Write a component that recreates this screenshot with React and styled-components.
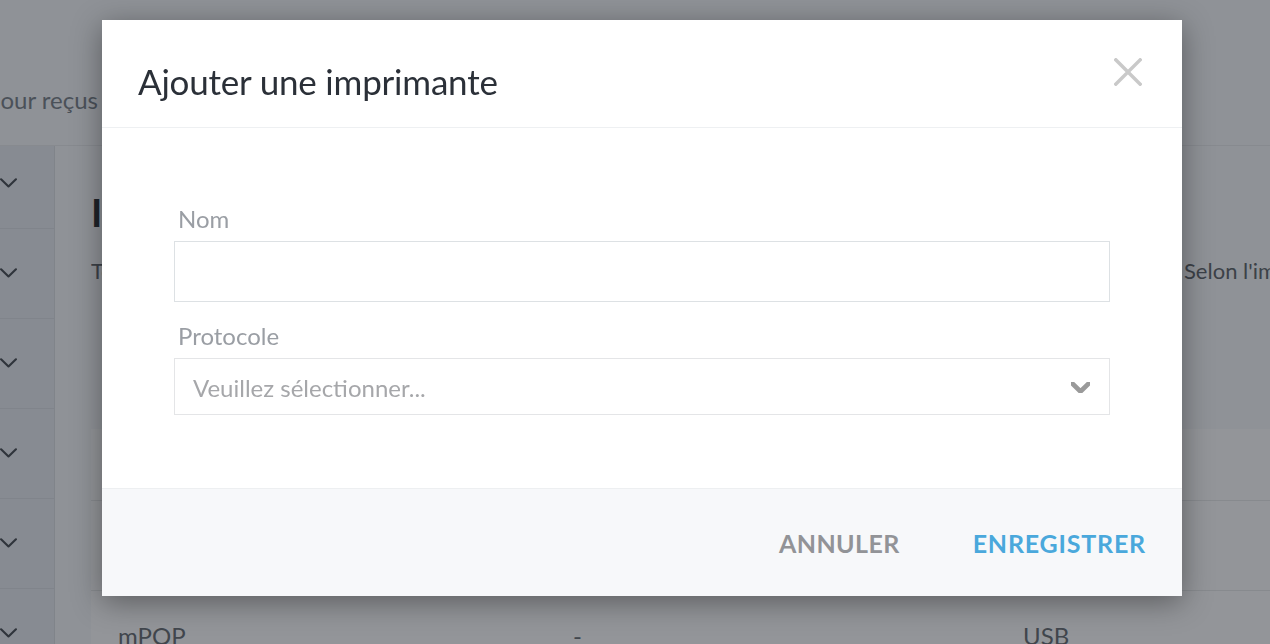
import React from 'react';
import styled, { createGlobalStyle } from 'styled-components';

const Global = createGlobalStyle`
  html, body { margin: 0; padding: 0; height: 100%; overflow: hidden; }
  body { font-family: Lato, "Noto Sans", sans-serif; background: #8f9297; }
  * { box-sizing: border-box; }
`;

const Page = styled.div`
  width: 1270px;
  height: 644px;
  display: flex;
  flex-direction: column;
  overflow: hidden;
  background: #8f9297;
`;

const TopBar = styled.header`
  height: 146px;
  flex: none;
  border-bottom: 1px solid #878a8f;
  display: flex;
  align-items: flex-end;
  padding-bottom: 31px;
`;

const Tab = styled.span`
  font-size: 24px;
  line-height: 29px;
  color: #4b5159;
  margin-left: -13px;
  white-space: nowrap;
`;

const Content = styled.div`
  flex: 1;
  display: flex;
  min-height: 0;
`;

const Sidebar = styled.nav`
  width: 55px;
  flex: none;
  background: #878b92;
  border-right: 1px solid #80848a;
  display: flex;
  flex-direction: column;
`;

const SideRow = styled.div`
  height: ${p => (p.$first ? 83 : 90)}px;
  flex: none;
  border-bottom: 1px solid #80848b;
  display: flex;
  align-items: center;
  padding-bottom: ${p => (p.$first ? 8 : 0)}px;
  color: #2f343b;
`;

const Main = styled.main`
  flex: 1;
  padding-left: 36px;
  display: flex;
  flex-direction: column;
  min-width: 0;
`;

const Heading = styled.h1`
  margin: 44px 0 0;
  font-size: 38px;
  line-height: 44px;
  font-weight: 700;
  color: #1e2329;
  white-space: nowrap;
`;

const Para = styled.p`
  margin: 22px 0 0;
  font-size: 22px;
  line-height: 30px;
  color: #3c4148;
  white-space: nowrap;
  display: flex;
`;

const ParaLead = styled.span`
  width: 1093px;
  flex: none;
  overflow: hidden;
`;

const Table = styled.div`
  margin-top: 143px;
  background: #939599;
  display: flex;
  flex-direction: column;
`;

const TRow = styled.div`
  height: ${p => (p.$head ? 72 : 90)}px;
  flex: none;
  border-bottom: 1px solid #878a8e;
  display: grid;
  grid-template-columns: 455px 450px 1fr;
  align-items: center;
  padding-left: 27px;
  font-size: 24px;
  color: #41464d;
  white-space: nowrap;
`;

const Overlay = styled.div`
  position: fixed;
  inset: 0;
  padding: 20px 0 0 102px;
`;

const Modal = styled.div`
  width: 1080px;
  background: #ffffff;
  box-shadow: 0 6px 28px rgba(0, 0, 0, 0.38);
  display: flex;
  flex-direction: column;
`;

const ModalHeader = styled.div`
  height: 108px;
  flex: none;
  border-bottom: 1px solid #eef0f2;
  display: flex;
  align-items: center;
  justify-content: space-between;
  padding: 14px 40px 0 36px;
`;

const Title = styled.h2`
  margin: 0;
  font-size: 35px;
  line-height: 42px;
  font-weight: 400;
  color: #2b3038;
  letter-spacing: -0.2px;
`;

const CloseButton = styled.button`
  border: 0;
  background: none;
  padding: 0;
  width: 28px;
  height: 28px;
  display: flex;
  align-items: center;
  justify-content: center;
  cursor: pointer;
  margin-bottom: 18px;
`;

const ModalBody = styled.div`
  height: 360px;
  flex: none;
  padding: 77px 72px 0;
  display: flex;
  flex-direction: column;
`;

const Field = styled.div`
  display: flex;
  flex-direction: column;
  & + & { margin-top: 20px; }
`;

const Label = styled.label`
  font-size: 24px;
  line-height: 28px;
  color: #9a9ea4;
  padding-left: 4px;
  margin-bottom: 8px;
`;

const TextInput = styled.input`
  height: 61px;
  border: 1px solid #dde1e4;
  border-radius: 0;
  padding: 0 18px;
  font: inherit;
  font-size: 24px;
  outline: none;
`;

const SelectBox = styled.div`
  height: 57px;
  border: 1px solid #e4e5e7;
  display: flex;
  align-items: center;
  justify-content: space-between;
  padding: 2px 19px 0 18px;
  font-size: 24px;
  color: #a6a7aa;
`;

const ModalFooter = styled.div`
  height: 108px;
  flex: none;
  background: #f7f8fa;
  border-top: 1px solid #edeff1;
  display: flex;
  align-items: center;
  justify-content: flex-end;
  padding: 0 36px 0 0;
  gap: 73px;
`;

const FooterButton = styled.button`
  border: 0;
  background: none;
  padding: 0;
  font-family: inherit;
  font-size: 25px;
  font-weight: 700;
  letter-spacing: ${p => (p.$primary ? 0.8 : 0.4)}px;
  color: ${p => (p.$primary ? '#4aa8dc' : '#929397')};
  cursor: pointer;
`;

const Chevron = ({ size = 16, weight = 2, color = 'currentColor' }) => (
  <svg width={size} height={size * 0.6} viewBox="0 0 16 9.6" fill="none">
    <path d="M1 1.2 L8 8 L15 1.2" stroke={color} strokeWidth={weight} strokeLinecap="round" strokeLinejoin="round" />
  </svg>
);

const CloseIcon = () => (
  <svg width="28" height="28" viewBox="0 0 28 28" fill="none">
    <path d="M1.8 1.8 L26.2 26.2 M26.2 1.8 L1.8 26.2" stroke="#c9c9c9" strokeWidth="3.4" strokeLinecap="square" />
  </svg>
);

export default function App() {
  const sideRows = [0, 1, 2, 3, 4, 5];
  return (
    <>
      <Global />
      <Page>
        <TopBar>
          <Tab>pour reçus</Tab>
        </TopBar>
        <Content>
          <Sidebar>
            {sideRows.map(i => (
              <SideRow key={i} $first={i === 0}>
                <Chevron size={17} weight={2} />
              </SideRow>
            ))}
          </Sidebar>
          <Main>
            <Heading>Imprimantes</Heading>
            <Para>
              <ParaLead>Toutes les imprimantes connectées à votre caisse sont listées ici.</ParaLead>
              <span>Selon l'imprimante</span>
            </Para>
            <Table>
              <TRow $head />
              <TRow />
              <TRow>
                <span>mPOP</span>
                <span>-</span>
                <span>USB</span>
              </TRow>
            </Table>
          </Main>
        </Content>
      </Page>
      <Overlay>
        <Modal role="dialog" aria-label="Ajouter une imprimante">
          <ModalHeader>
            <Title>Ajouter une imprimante</Title>
            <CloseButton aria-label="Fermer">
              <CloseIcon />
            </CloseButton>
          </ModalHeader>
          <ModalBody>
            <Field>
              <Label>Nom</Label>
              <TextInput type="text" />
            </Field>
            <Field>
              <Label>Protocole</Label>
              <SelectBox>
                <span>Veuillez sélectionner...</span>
                <Chevron size={19} weight={4} color="#9a9a9a" />
              </SelectBox>
            </Field>
          </ModalBody>
          <ModalFooter>
            <FooterButton>ANNULER</FooterButton>
            <FooterButton $primary>ENREGISTRER</FooterButton>
          </ModalFooter>
        </Modal>
      </Overlay>
    </>
  );
}
